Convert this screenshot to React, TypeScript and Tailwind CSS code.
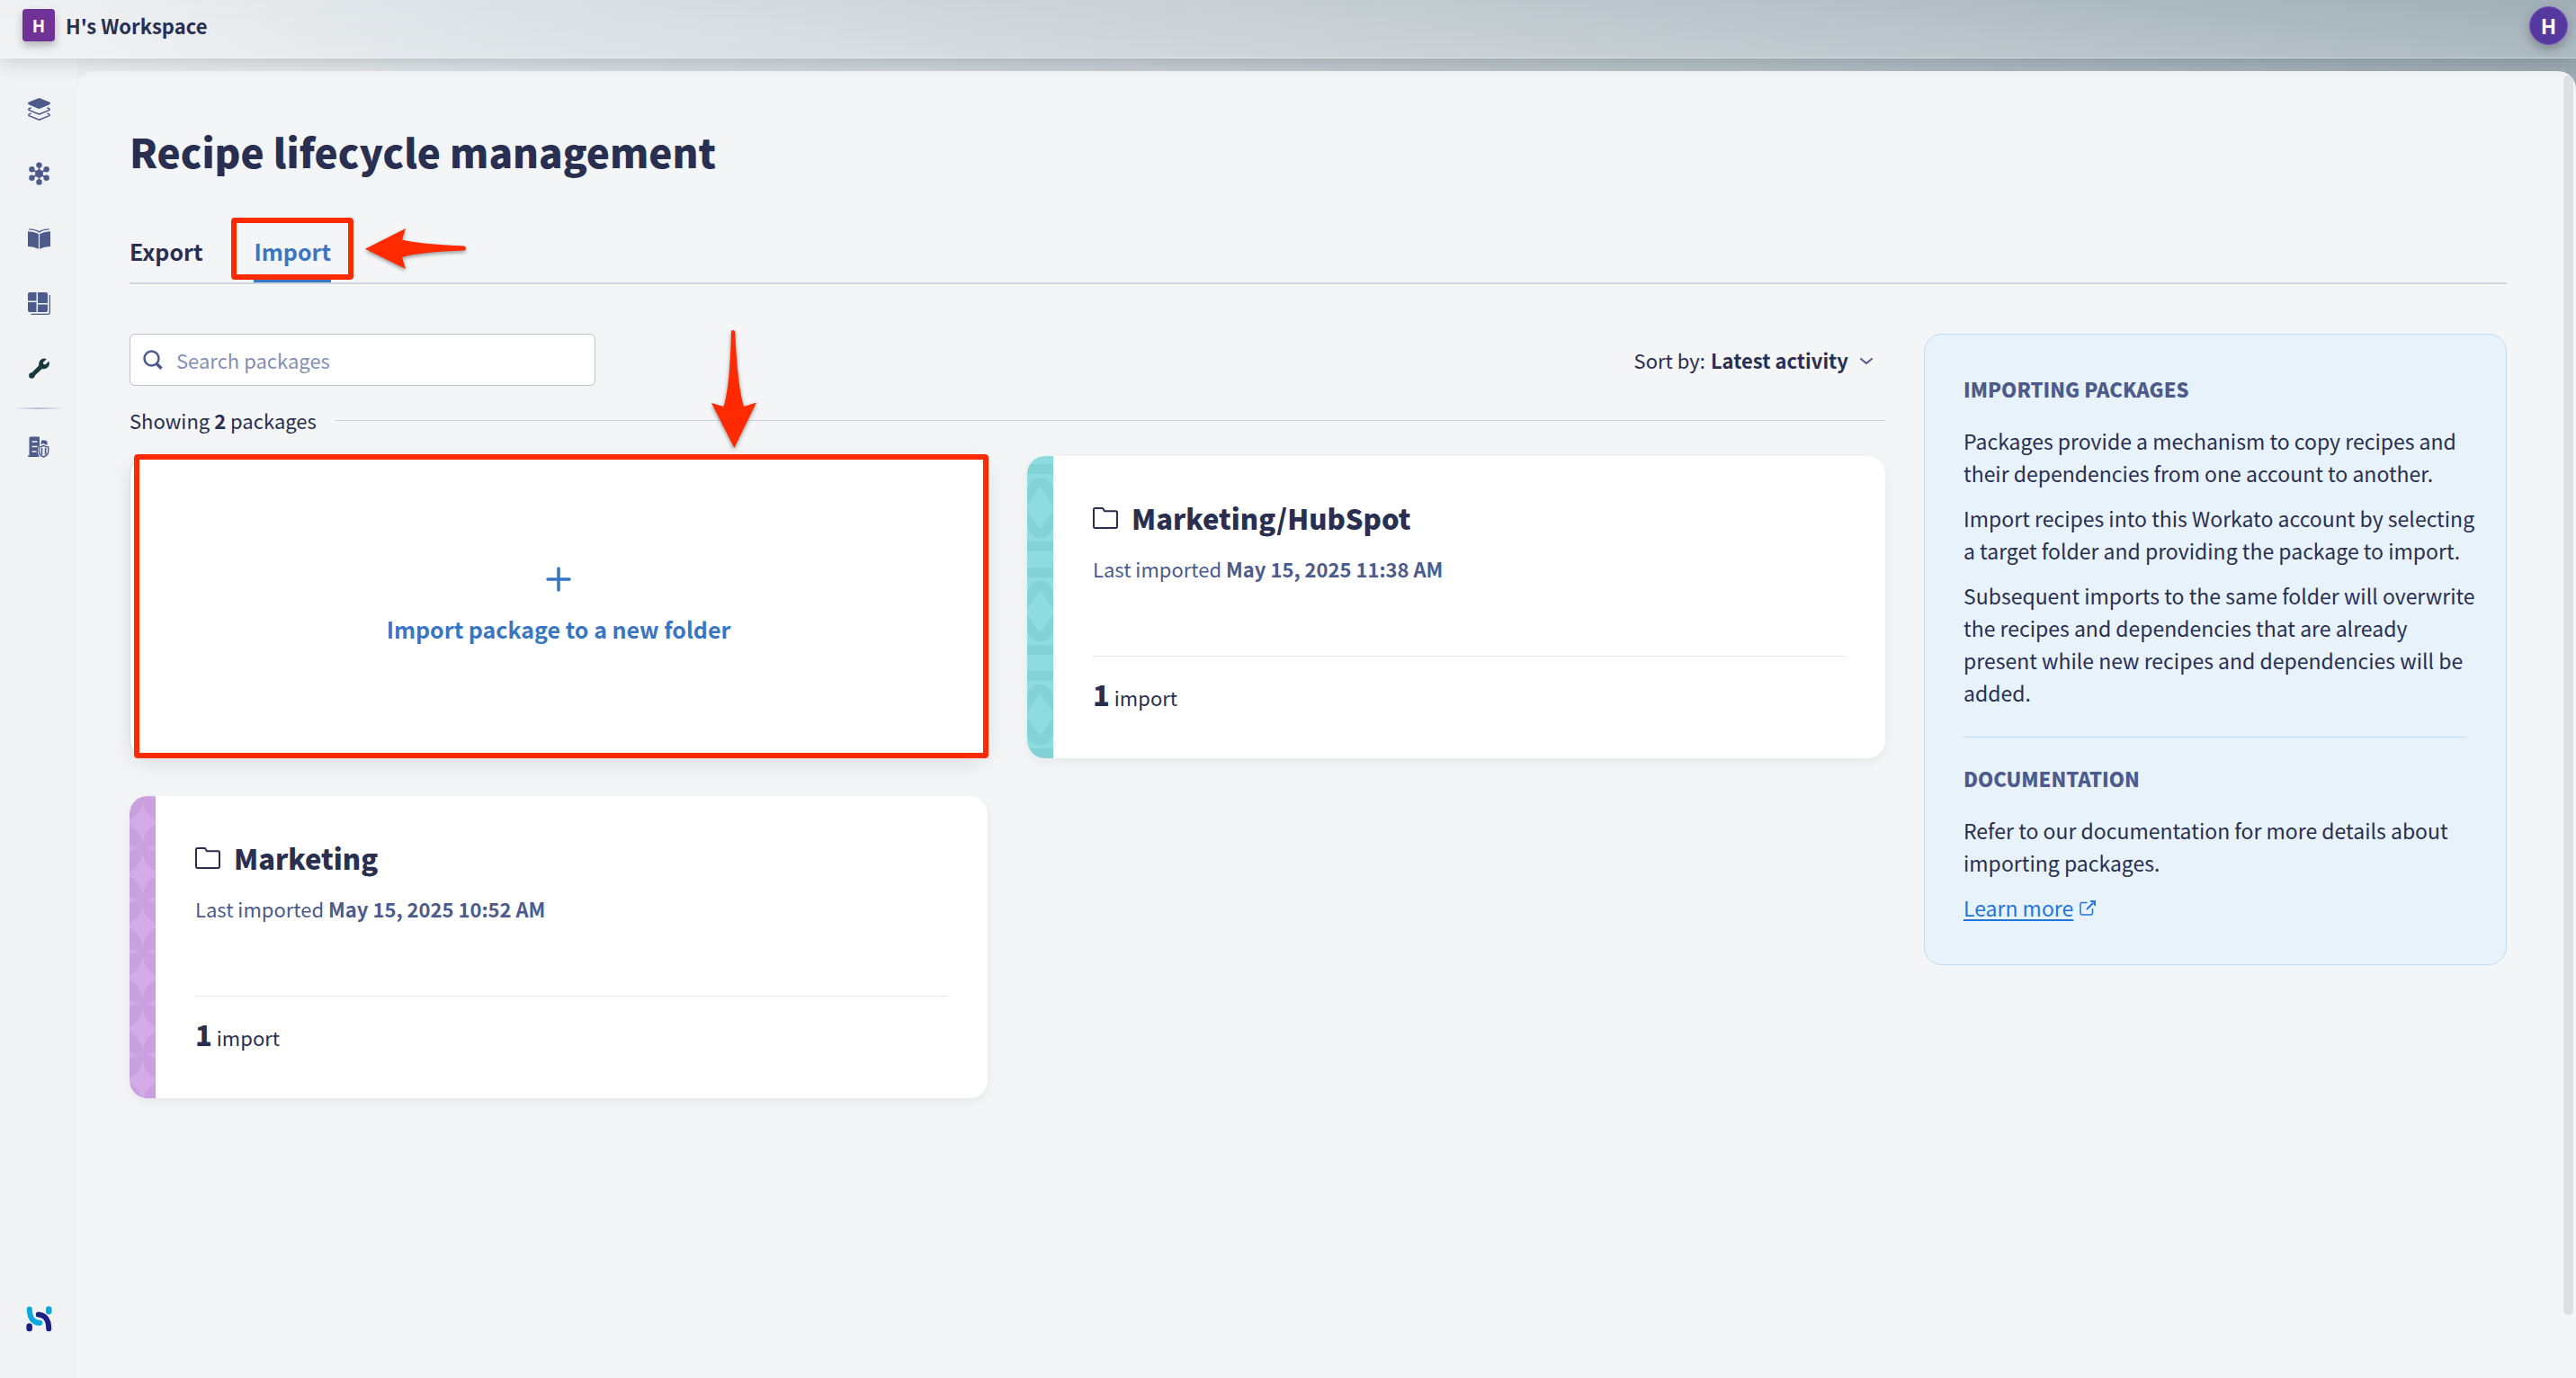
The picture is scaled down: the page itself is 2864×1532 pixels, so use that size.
import React, { useState } from "react";

const LayersIcon = () => (
  <svg width="25" height="25" viewBox="0 0 25 25" fill="none" aria-hidden="true">
    <path fill="currentColor" d="M11 .4q1.500-.6 3 0L24 4.600q2 1.200 0 2.600L14 11.600q-1.500.6-3 0L1 7.200q-2-1.400 0-2.600z" />
    <path stroke="currentColor" strokeWidth="1.500" strokeLinejoin="round" strokeLinecap="round" d="M3.200 11 1.200 12q-.8.700 0 1.400L12.500 18l11.300-4.600q.8-.7 0-1.400l-2-1M3.200 17.200l-2 1q-.8.700 0 1.400l11.300 4.600 11.300-4.600q.8-.7 0-1.400l-2-1" />
  </svg>
);

const HubIcon = () => (
  <svg width="25" height="26" viewBox="0 0 25 26" aria-hidden="true">
    <path stroke="currentColor" strokeWidth="1.600" d="M12.500 3.500v19M4.300 8.300l16.400 9.400M20.700 8.300 4.300 17.700" />
    <g fill="currentColor">
      <circle cx="12.500" cy="13" r="4.500" />
      <circle cx="12.500" cy="3.600" r="3.200" />
      <circle cx="12.500" cy="22.400" r="3.200" />
      <circle cx="4.400" cy="8.300" r="3.200" />
      <circle cx="20.600" cy="8.300" r="3.200" />
      <circle cx="4.400" cy="17.700" r="3.200" />
      <circle cx="20.600" cy="17.700" r="3.200" />
    </g>
  </svg>
);

const BookIcon = () => (
  <svg width="25" height="23" viewBox="0 0 25 23" fill="none" aria-hidden="true">
    <path fill="currentColor" d="M0 3.200q6.500 0 11.900 2.700v16.900Q6.500 20 0 20zM25 3.200q-6.500 0-11.900 2.700v16.900Q18.500 20 25 20z" />
    <path stroke="currentColor" strokeWidth="1.300" d="M1.200.9q7 .2 11.300 3Q16.800 1.100 23.800.9" />
  </svg>
);

const DashboardIcon = () => (
  <svg width="25" height="25" viewBox="0 0 25 25" fill="none" aria-hidden="true">
    <path fill="currentColor" d="M2 0h7.500v9.500H0V2q0-2 2-2zM11 0h9q2 0 2 2v10H11zM0 11h9.500v11H2q-2 0-2-2zM11 13.500h11V20q0 2-2 2h-9z" />
    <path stroke="currentColor" strokeWidth="1.300" d="M24.300 3v19.300q0 2-2 2H3.500" />
  </svg>
);

const WrenchIcon = () => (
  <svg width="23" height="23" viewBox="0 0 23 23" aria-hidden="true">
    <path
      fill="currentColor"
      d="M19.800 1.200 16.600 4.300q-1.400 1.500.1 2.600 1.200.9 2.400-.2l3.300-3.200q1.500 4-1.200 6.800-2.900 2.500-6.400 1.600L7 19.200Q6.400 22.600 3.300 22.700.1 22.500.1 19.400.3 16.500 3.600 16l7.600-7.500Q10.500 5 12.900 2.300 16-.5 19.800 1.200z"
    />
  </svg>
);

const ComplianceIcon = () => (
  <svg width="24" height="24" viewBox="0 0 24 24" fill="none" aria-hidden="true">
    <path fill="currentColor" d="M3 .5h9q1 0 1 1v9l-2 1.500v7L12.500 22v1H0v-1.500h1.500V2q0-1.500 1.500-1.500z" />
    <path stroke="#f1f2f4" strokeWidth="1.300" d="M4.500 6h6M4.500 11.500h6M4.500 17h5" />
    <path fill="currentColor" d="M15 4.500h4q2 0 2.500 2V10L17 8l-2.500 1.500z" />
    <path fill="#f1f2f4" stroke="currentColor" strokeWidth="1.400" d="M17.500 10.300q2.500 1.700 5.200 1.700v4.500q0 4.700-5.200 6.500-5.200-1.800-5.200-6.500V12q2.700 0 5.200-1.700z" />
    <path stroke="currentColor" strokeWidth="1.700" d="M15.400 13v7.500M19.600 13v7.500" />
  </svg>
);

const BrandLogo = () => (
  <svg width="29" height="29" viewBox="0 0 29 29" fill="none" strokeLinecap="round" aria-hidden="true">
    <path stroke="#0aa9dc" strokeWidth="6" d="M3.800 3.600C3.800 12 7 18.600 15.300 18.800" />
    <path stroke="#f1f2f4" strokeWidth="8" d="M14 9.500C20.500 9.700 25.200 15 25.200 25" />
    <path stroke="#1b1f86" strokeWidth="6" d="M13.800 9.500C20.500 9.700 25.200 15 25.200 25.200" />
    <rect x="22" y=".3" width="6.500" height="9" rx="3" fill="#0aa9dc" />
    <rect x=".4" y="19.300" width="6.500" height="9" rx="3" fill="#1b1f86" />
  </svg>
);

const FolderIcon = () => (
  <svg width="28" height="24" viewBox="0 0 28 24" fill="none" aria-hidden="true">
    <path
      stroke="currentColor"
      strokeWidth="2"
      strokeLinejoin="round"
      d="M2.500 1h7.800q.9 0 1.300.8l1.400 2.400h12.500Q27 4.200 27 5.700v15.600q0 1.700-1.500 1.700h-23Q1 23 1 21.300V2.500Q1 1 2.500 1z"
    />
  </svg>
);

const OvalPattern = () => (
  <svg className="h-full w-[29px] shrink-0" aria-hidden="true">
    <defs>
      <pattern id="ovals" width="29" height="115" patternUnits="userSpaceOnUse">
        <rect width="29" height="115" fill="#8fdce0" />
        <rect y="9" width="29" height="11" fill="#83d2d6" />
        <rect y="95" width="29" height="11" fill="#83d2d6" />
        <path fill="#83d2d6" d="M0 38Q3 24 14.500 24T29 38V78Q26 91 14.500 91T0 78z" />
        <path fill="#8fdce0" d="M12.500 36.500Q14.500 33 16.500 36.500L29 55V61L16.500 78.500Q14.500 82 12.500 78.500L0 61V55z" />
      </pattern>
    </defs>
    <rect width="29" height="100%" fill="url(#ovals)" />
  </svg>
);

const StarPattern = () => (
  <svg className="h-full w-[29px] shrink-0" aria-hidden="true">
    <defs>
      <pattern id="stars" width="29" height="57.500" patternUnits="userSpaceOnUse">
        <rect width="29" height="57.500" fill="#c89fdf" />
        <path fill="#d4abe9" d="M14.500 6Q12.500 20 0 26.500V32Q12 38 14.500 52 17 38 29 32V26.500Q16.500 20 14.500 6z" />
        <path fill="#d4abe9" d="M0 0Q6 0 11 .8 6 2 0 4zM29 0Q23 0 18 .8 23 2 29 4zM0 54.500Q5 56.500 11 57.500H0zM29 54.500Q24 56.500 18 57.500H29z" />
      </pattern>
    </defs>
    <rect width="29" height="100%" fill="url(#stars)" />
  </svg>
);

const navItems = [
  { label: "Projects", icon: <LayersIcon /> },
  { label: "Connections", icon: <HubIcon /> },
  { label: "Library", icon: <BookIcon /> },
  { label: "Dashboard", icon: <DashboardIcon /> },
  { label: "Tools", icon: <WrenchIcon />, active: true },
];

function Sidebar() {
  return (
    <nav aria-label="Main" className="flex w-[86px] shrink-0 flex-col items-center bg-[#f1f2f4] pt-5 pb-[51px] text-[#4c5b8b]">
      {navItems.map((item) => (
        <button
          key={item.label}
          aria-label={item.label}
          className={item.active ? "flex h-[72px] w-full items-center justify-center text-[#16393f]" : "flex h-[72px] w-full items-center justify-center"}
        >
          {item.icon}
        </button>
      ))}
      <div className="mt-2 h-[2px] w-14 bg-gradient-to-r from-transparent via-[#b7bfd6] to-transparent" />
      <button aria-label="Admin" className="mt-[6px] flex h-[72px] w-full items-center justify-center">
        <ComplianceIcon />
      </button>
      <a href="#home" aria-label="Home" className="mt-auto">
        <BrandLogo />
      </a>
    </nav>
  );
}

function Header() {
  return (
    <header className="z-10 flex h-[65px] shrink-0 items-center justify-between border-b border-white/40 bg-gradient-to-b from-white/5 to-white/20 pr-[9px] pb-2 pl-[25px] shadow-[0_4px_22px_rgba(0,0,0,0.16)]">
      <div className="flex items-center gap-3">
        <span className="flex size-9 items-center justify-center rounded bg-[#713297] text-[19px] font-bold text-white shadow-[0_5px_10px_rgba(0,0,0,0.25)]">H</span>
        <span className="font-bold">H's Workspace</span>
      </div>
      <button aria-label="Account" className="flex size-[43px] items-center justify-center rounded-full border border-[#7d55c0] bg-[#5538a0] text-[23px] font-bold text-white shadow-[0_5px_12px_rgba(0,0,0,0.25)]">
        H
      </button>
    </header>
  );
}

function Tabs() {
  return (
    <div className="mt-[65px] flex gap-[57px] border-b-2 border-[#cdd5df] text-[25px] leading-9 font-bold">
      <button className="pb-[17px]">Export</button>
      <div className="relative">
        <button className="border-b-4 border-[#3876c4] pb-[13px] text-[#3876c4]">Import</button>
        <div className="pointer-events-none absolute -inset-x-[25px] -top-[19px] bottom-[3px] rounded border-[6px] border-[#ff2a00]" />
        <svg className="pointer-events-none absolute -top-3 left-[124px] overflow-visible drop-shadow-[0_2px_2px_rgba(0,0,0,0.4)]" width="114" height="54" viewBox="0 0 114 54" aria-hidden="true">
          <path fill="#ff2a00" d="M0 27.700 45 5 41 17.500Q60 22.500 110 24.500 112 25 112 27.300 112 29.500 110 29.500 60 31 41 37L45 50z" />
        </svg>
      </div>
    </div>
  );
}

type Pkg = { name: string; date: string; imports: number; pattern: React.ReactNode };

const packages: Pkg[] = [
  { name: "Marketing/HubSpot", date: "May 15, 2025 11:38 AM", imports: 1, pattern: <OvalPattern /> },
  { name: "Marketing", date: "May 15, 2025 10:52 AM", imports: 1, pattern: <StarPattern /> },
];

function PackageCard({ name, date, imports, pattern }: Pkg) {
  return (
    <article className="flex h-[336px] overflow-hidden rounded-[20px] bg-white shadow-[0_4px_14px_rgba(0,0,0,0.06)]">
      {pattern}
      <div className="flex flex-1 flex-col pt-[49px] pr-11 pb-12 pl-11">
        <h2 className="flex items-center gap-[15px] text-[31px] leading-10 font-black">
          <FolderIcon />
          {name}
        </h2>
        <p className="mt-[18px] text-[#4c5b8b]">
          Last imported <span className="font-bold">{date}</span>
        </p>
        <p className="mt-auto border-t border-[#e4e6e9] pt-[22px] leading-10">
          <span className="text-[31px] font-black">{imports}</span> import
        </p>
      </div>
    </article>
  );
}

function HelpPanel() {
  return (
    <aside className="w-[648px] shrink-0 self-start rounded-[20px] border border-[#bcdcf5] bg-[#e8f2fb] px-[43px] pt-[42px] pb-[45px] text-[23px]">
      <h3 className="text-[22px] font-black text-[#4c5b8b]">IMPORTING PACKAGES</h3>
      <div className="mt-[22px] -mr-4 flex flex-col gap-[14px]">
        <p>Packages provide a mechanism to copy recipes and their dependencies from one account to another.</p>
        <p>Import recipes into this Workato account by selecting a target folder and providing the package to import.</p>
        <p>Subsequent imports to the same folder will overwrite the recipes and dependencies that are already present while new recipes and dependencies will be added.</p>
      </div>
      <hr className="mt-[31px] border-[#bcdcf5]" />
      <h3 className="mt-[27px] text-[22px] font-black text-[#4c5b8b]">DOCUMENTATION</h3>
      <p className="mt-[22px] -mr-4">Refer to our documentation for more details about importing packages.</p>
      <a href="#learn-more" className="mt-[14px] flex items-center gap-[7px] text-[#2276d9]">
        <span className="underline decoration-2 underline-offset-[3px]">Learn more</span>
        <svg width="18" height="17" viewBox="0 0 18 17" fill="none" stroke="currentColor" strokeWidth="1.500" aria-hidden="true">
          <path strokeLinecap="round" d="M8 2.500H3Q1 2.500 1 4.500V14Q1 16 3 16h9.500q2 0 2-2V9.500" />
          <path strokeWidth="2" d="M8 10 15.500 2.500" />
          <path fill="currentColor" stroke="none" d="M11.500 0H18v6.500L16 5.500V2H12.500z" />
        </svg>
      </a>
    </aside>
  );
}

function Packages() {
  const [query, setQuery] = useState("");
  return (
    <section className="min-w-0 flex-1">
      <div className="flex items-center justify-between">
        <div className="relative">
          <svg className="pointer-events-none absolute top-[18px] left-[15px] text-[#4c5b8b]" width="22" height="22" viewBox="0 0 22 22" fill="none" stroke="currentColor" aria-hidden="true">
            <circle cx="9.500" cy="9.500" r="8" strokeWidth="2.500" />
            <path strokeWidth="3.600" d="m14.500 14.800 6 6" />
          </svg>
          <input
            type="search"
            aria-label="Search packages"
            placeholder="Search packages"
            value={query}
            onChange={(e) => setQuery(e.target.value)}
            className="h-[58px] w-[518px] rounded-md border border-[#bcc5d0] bg-white pr-4 pl-[51px] placeholder:text-[#8390b3]"
          />
        </div>
        <div className="flex items-center gap-[6px] pr-[14px]">
          <label htmlFor="sort">Sort by:</label>
          <div className="relative">
            <select id="sort" className="field-sizing-content appearance-none bg-transparent pr-[27px] font-bold">
              <option>Latest activity</option>
            </select>
            <svg className="pointer-events-none absolute top-[16px] right-0 text-[#4c5b8b]" width="14" height="8" viewBox="0 0 14 8" fill="none" aria-hidden="true">
              <path stroke="currentColor" strokeWidth="2" strokeLinecap="round" strokeLinejoin="round" d="m1 1 6 5 6-5" />
            </svg>
          </div>
        </div>
      </div>

      <div className="relative mt-5 flex items-center gap-[21px]">
        <p>
          Showing <b>2</b> packages
        </p>
        <div className="h-px flex-1 bg-[#c9d3e2]" />
        <svg className="pointer-events-none absolute -top-[84px] left-[641px] z-10 overflow-visible drop-shadow-[0_2px_2px_rgba(0,0,0,0.4)]" width="62" height="136" viewBox="0 0 62 136" aria-hidden="true">
          <path fill="#ff2a00" d="M31.300 133 6 83 19.500 87Q26.500 65 28 4 28.200 2 30 2 32 2 32.200 4 35 65 42 87L56 82.500z" />
        </svg>
      </div>

      <div className="mt-[22px] grid grid-cols-2 gap-x-11 gap-y-[42px]">
        <div className="relative">
          <button className="flex h-[336px] w-full flex-col items-center justify-center gap-[23px] rounded-[20px] border border-[#d5dbe4] bg-white pb-1 text-[25px] leading-9 font-bold text-[#3876c4] shadow-[0_6px_24px_rgba(0,0,0,0.1)]">
            <svg width="28" height="28" viewBox="0 0 28 28" aria-hidden="true">
              <path stroke="currentColor" strokeWidth="3.500" strokeLinecap="round" d="M14 2v24M2 14h24" />
            </svg>
            Import package to a new folder
          </button>
          <div className="pointer-events-none absolute -top-0.5 -right-px bottom-0 left-[5px] rounded border-[6px] border-[#ff2a00]" />
        </div>
        {packages.map((pkg) => (
          <PackageCard key={pkg.name} {...pkg} />
        ))}
      </div>
    </section>
  );
}

export default function App() {
  return (
    <div className="flex h-screen flex-col bg-[linear-gradient(to_right,#eff0f2_0%,#eceef0_3%,#d9dfe3_20%,#9baab3_100%)] font-['Noto_Sans_CJK_SC',sans-serif] text-[22px] leading-9 text-[#292f50]">
      <Header />
      <div className="flex min-h-0 flex-1">
        <Sidebar />
        <div className="flex min-w-0 flex-1 flex-col pt-[14px]">
          <main className="relative flex-1 rounded-t-[20px] bg-[#f4f5f7] pt-[61px] pr-[77px] pl-[58px]">
            <h1 className="text-[44px] leading-[56px] font-black">Recipe lifecycle management</h1>
            <Tabs />
            <div className="mt-[55px] flex gap-[43px]">
              <Packages />
              <HelpPanel />
            </div>
            <div aria-hidden="true" className="absolute top-[5px] right-[3px] bottom-[70px] w-[11px] rounded-full bg-[#dce0e4]" />
          </main>
        </div>
      </div>
    </div>
  );
}
